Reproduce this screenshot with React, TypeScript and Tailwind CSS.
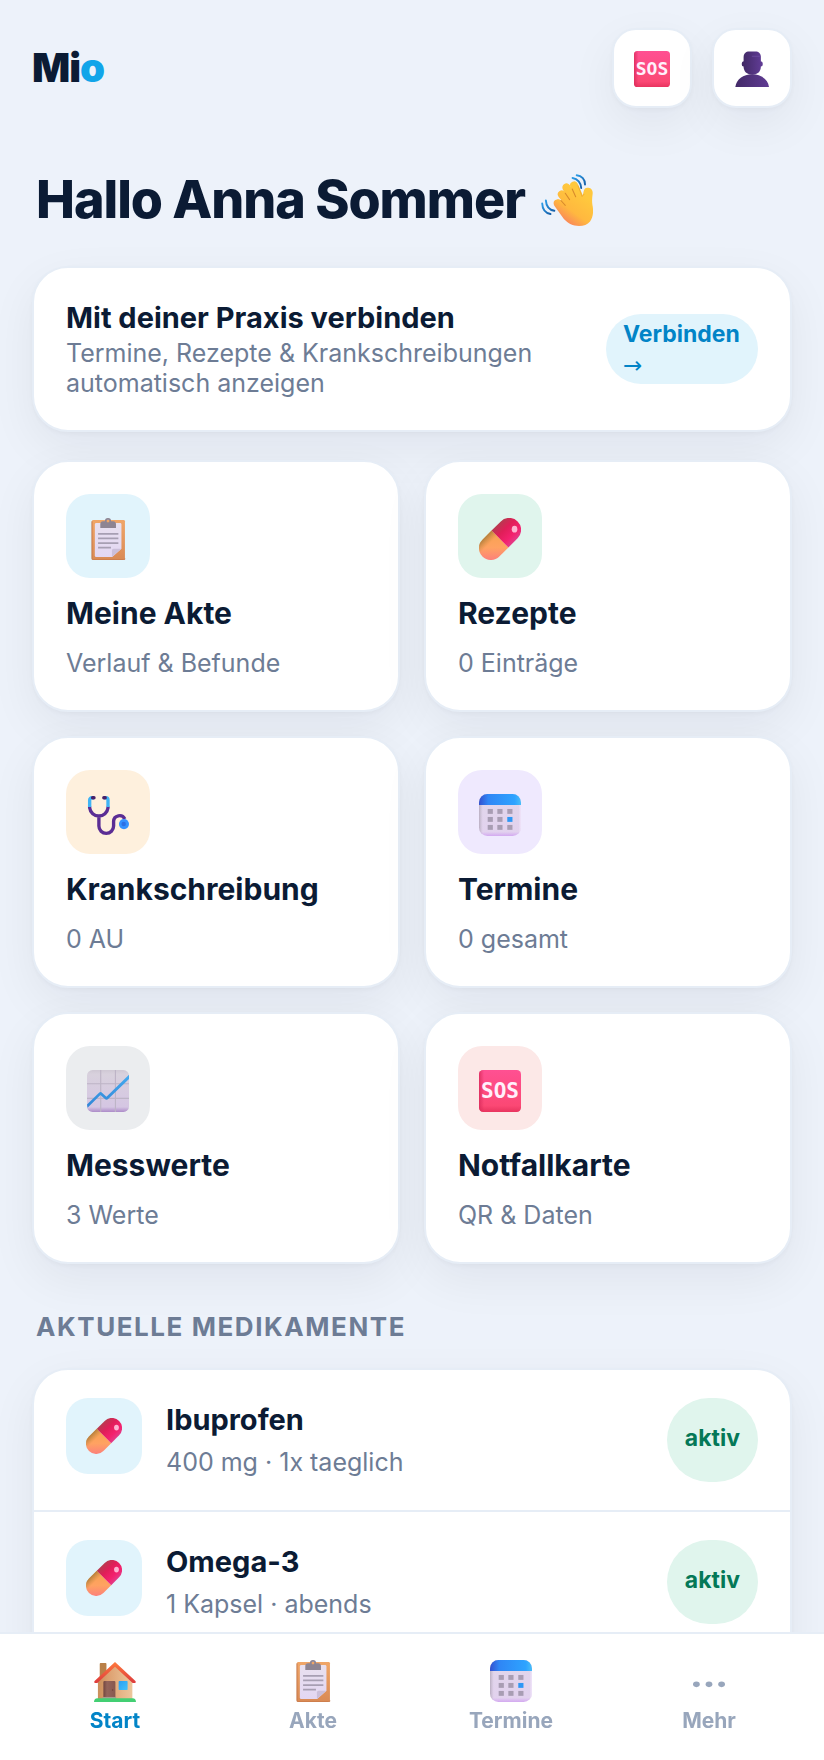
import type { ComponentType } from 'react';

type Icon = ComponentType<{ className?: string }>;

interface Tile {
  title: string;
  subtitle: string;
  href: string;
  icon: Icon;
  tint: string;
}

interface Medication {
  name: string;
  dose: string;
}

interface NavItem {
  label: string;
  href: string;
  icon: Icon;
  active?: boolean;
}

const CARD = 'bg-white border-2 border-[#e6edf6] shadow-[0_2px_4px_rgba(15,23,42,0.03),0_16px_48px_rgba(15,23,42,0.06)]';

// Gradients shared by all emoji drawings
function EmojiDefs() {
  return (
    <svg className="absolute w-0 h-0" aria-hidden="true">
      <defs>
        <linearGradient id="sosFace" x1="0" y1="0" x2="0" y2="1">
          <stop offset="0" stopColor="#ff5092" />
          <stop offset="0.85" stopColor="#fb4874" />
          <stop offset="1" stopColor="#e8345f" />
        </linearGradient>
        <linearGradient id="sosEdge" x1="0" y1="0" x2="1" y2="0">
          <stop offset="0" stopColor="#d92a5a" stopOpacity="0.8" />
          <stop offset="0.12" stopColor="#d92a5a" stopOpacity="0" />
        </linearGradient>
        <linearGradient id="bust" x1="0" y1="0" x2="1" y2="0">
          <stop offset="0" stopColor="#432a68" />
          <stop offset="1" stopColor="#5f3b93" />
        </linearGradient>
        <linearGradient id="board" x1="0" y1="0" x2="0" y2="1">
          <stop offset="0" stopColor="#f0a668" />
          <stop offset="1" stopColor="#d98a55" />
        </linearGradient>
        <linearGradient id="sheet" x1="0" y1="0" x2="0" y2="1">
          <stop offset="0" stopColor="#e8e0ef" />
          <stop offset="1" stopColor="#e3d7f3" />
        </linearGradient>
        <linearGradient id="pillPink" x1="0" y1="0" x2="0" y2="1">
          <stop offset="0" stopColor="#b83a50" />
          <stop offset="0.35" stopColor="#e01e58" />
          <stop offset="0.75" stopColor="#f4216e" />
          <stop offset="1" stopColor="#e23c88" />
        </linearGradient>
        <linearGradient id="pillOrange" x1="1" y1="0" x2="0" y2="1">
          <stop offset="0" stopColor="#f6a24e" />
          <stop offset="0.5" stopColor="#ffa262" />
          <stop offset="1" stopColor="#fb7384" />
        </linearGradient>
        <linearGradient id="pillShade" x1="0" y1="0" x2="0" y2="1">
          <stop offset="0" stopColor="#a87a3a" stopOpacity="0.85" />
          <stop offset="1" stopColor="#c98a40" stopOpacity="0" />
        </linearGradient>
        <linearGradient id="calTop" x1="0" y1="0" x2="1" y2="0">
          <stop offset="0" stopColor="#3350cf" />
          <stop offset="0.22" stopColor="#2f86f5" />
          <stop offset="0.85" stopColor="#2ea3ff" />
          <stop offset="1" stopColor="#49bdf8" />
        </linearGradient>
        <linearGradient id="calBody" x1="0" y1="0" x2="0" y2="1">
          <stop offset="0" stopColor="#e0d6ea" />
          <stop offset="0.9" stopColor="#e2d2ee" />
          <stop offset="1" stopColor="#d3a9f0" />
        </linearGradient>
        <linearGradient id="calEdge" x1="0" y1="0" x2="1" y2="0">
          <stop offset="0" stopColor="#a99fb0" stopOpacity="0.7" />
          <stop offset="0.09" stopColor="#b9b0c0" stopOpacity="0" />
          <stop offset="0.94" stopColor="#f0e4fa" stopOpacity="0" />
          <stop offset="1" stopColor="#f0e4fa" />
        </linearGradient>
        <linearGradient id="chartBg" x1="0" y1="0" x2="0" y2="1">
          <stop offset="0" stopColor="#cfc8d4" />
          <stop offset="0.1" stopColor="#d8d1dd" />
          <stop offset="0.88" stopColor="#d5c6e3" />
          <stop offset="1" stopColor="#ac8bc8" />
        </linearGradient>
        <linearGradient id="chartLine" x1="0" y1="0" x2="0" y2="1">
          <stop offset="0" stopColor="#44aaf0" />
          <stop offset="1" stopColor="#3186d6" />
        </linearGradient>
        <linearGradient id="wall" x1="0" y1="0" x2="1" y2="0">
          <stop offset="0" stopColor="#c98f5a" />
          <stop offset="0.3" stopColor="#dda070" />
          <stop offset="1" stopColor="#ecc79c" />
        </linearGradient>
        <linearGradient id="roof" x1="0" y1="0" x2="0" y2="1">
          <stop offset="0" stopColor="#ff7a3d" />
          <stop offset="1" stopColor="#dd3b3d" />
        </linearGradient>
        <linearGradient id="door" x1="0" y1="0" x2="1" y2="0">
          <stop offset="0" stopColor="#71463f" />
          <stop offset="0.3" stopColor="#93645a" />
          <stop offset="1" stopColor="#87584f" />
        </linearGradient>
        <linearGradient id="pane" x1="0" y1="0" x2="1" y2="1">
          <stop offset="0" stopColor="#2a9ff2" />
          <stop offset="1" stopColor="#42c2fb" />
        </linearGradient>
        <linearGradient id="hand" gradientUnits="userSpaceOnUse" x1="24" y1="12" x2="13" y2="27">
          <stop offset="0" stopColor="#ffc83d" />
          <stop offset="0.6" stopColor="#ffb83f" />
          <stop offset="1" stopColor="#f9875a" />
        </linearGradient>
        <linearGradient id="motion" x1="0" y1="0" x2="1" y2="1">
          <stop offset="0" stopColor="#2c9be6" />
          <stop offset="1" stopColor="#155fa8" />
        </linearGradient>
      </defs>
    </svg>
  );
}

function SosIcon({ className }: { className?: string }) {
  return (
    <svg viewBox="0 0 30 30" className={className} aria-hidden="true">
      <rect width="30" height="30" rx="3" fill="url(#sosFace)" />
      <rect width="30" height="30" rx="3" fill="url(#sosEdge)" />
      <text
        x="15"
        y="20"
        textAnchor="middle"
        fill="#fff0fb"
        className="text-[15px] font-bold font-['DejaVu_Sans_Mono',monospace]"
      >
        SOS
      </text>
    </svg>
  );
}

function PersonIcon({ className }: { className?: string }) {
  return (
    <svg viewBox="0 0 30 30" className={className} aria-hidden="true">
      <ellipse cx="8" cy="10.8" rx="1.6" ry="2.2" fill="#432a68" />
      <ellipse cx="22.4" cy="10.8" rx="1.6" ry="2.2" fill="#5f3b93" />
      <path
        d="M8 5C8 2 10 .4 12.6.4h5.200C20.600.4 22.400 2 22.400 5v8c0 4-2.600 6.800-7.200 6.800S8 17 8 13z"
        fill="url(#bust)"
      />
      <path d="M1.1 30C2 23.6 7.6 19.4 15.2 19.4S28.3 23.6 29.2 30z" fill="url(#bust)" />
      <path d="M15.2 4.4h6" stroke="#7350a8" strokeWidth="0.8" strokeLinecap="round" opacity="0.7" />
    </svg>
  );
}

function ClipboardIcon({ className }: { className?: string }) {
  return (
    <svg viewBox="0 0 30 30" className={className} aria-hidden="true">
      <rect x="3.5" y="1.4" width="23.6" height="28.6" rx="1" fill="url(#board)" />
      <path d="M3.5 2.4v26.6a1 1 0 0 0 1 1h21.6a1 1 0 0 0 1-1" fill="none" stroke="#bf6f42" strokeWidth="0.6" />
      <path d="M6.6 3.6h17a1 1 0 0 1 1 1v17.3L18 27.9H6.6a1 1 0 0 1-1-1V4.6a1 1 0 0 1 1-1z" fill="url(#sheet)" />
      <path d="M24.6 21.9H19a1.2 1.2 0 0 0-1.2 1.2v4.8z" fill="#cbbfda" />
      <path d="M7.9 11.3h14.5M7.9 14.6h14.5M7.9 17.9h14.5M7.9 21.1h9.2" stroke="#a79fb3" strokeWidth="1.2" />
      <path
        d="M15 0a2.2 2.2 0 0 0-2.2 2.3h-1.3c-1.3 0-2 .9-2 2V7.1h11.2V4.3c0-1.1-.8-2-2-2h-1.5A2.2 2.2 0 0 0 15 0zm0 1.2a1 1 0 1 1 0 2 1 1 0 0 1 0-2z"
        fill="#8e8492"
        fillRule="evenodd"
      />
    </svg>
  );
}

function PillIcon({ className }: { className?: string }) {
  return (
    <svg viewBox="0 0 30 30" className={className} aria-hidden="true">
      <g transform="rotate(-45 15 15)">
        <path d="M15 6.5H5.8a8.5 8.5 0 0 0 0 17H15z" fill="url(#pillOrange)" />
        <path d="M15 6.5H5.8a8.5 8.5 0 0 0-8 5.6H15z" fill="url(#pillShade)" />
        <path d="M15 6.5h9.3a8.5 8.5 0 0 1 0 17H15z" fill="url(#pillPink)" />
      </g>
      <ellipse cx="25.4" cy="8" rx="2" ry="2.4" fill="#ffc3dc" opacity="0.9" />
    </svg>
  );
}

function StethoscopeIcon({ className }: { className?: string }) {
  return (
    <svg viewBox="0 0 30 30" className={className} fill="none" strokeWidth="2.4" aria-hidden="true">
      <path d="M1.9 9v.9a6.6 6.6 0 0 0 13.1 0V9" stroke="#5b2d94" />
      <path d="M8.5 16.6v6.3a5.2 5.2 0 0 0 10.5 0v-3.4a4.2 4.2 0 0 1 8-1.6" stroke="#5b2d94" />
      <path d="M5 2.7H3.5A1.6 1.6 0 0 0 1.9 4.3V9.2M12 2.7h1.4A1.6 1.6 0 0 1 15 4.3V9.2" stroke="#3fb4f5" />
      <path d="M4 2.7h1M12 2.7h1" stroke="#472069" strokeLinecap="round" />
      <circle cx="26.4" cy="21.5" r="3.6" fill="#3491ff" />
      <circle cx="26.2" cy="21.5" r="1.6" fill="#2c6fe4" />
    </svg>
  );
}

function CalendarIcon({ className }: { className?: string }) {
  const cols = [6.2, 13.1, 20.2];
  const rows = [10.7, 16.4, 22.1];

  return (
    <svg viewBox="0 0 30 30" className={className} aria-hidden="true">
      <rect width="30" height="30" rx="6" fill="url(#calBody)" />
      <rect width="30" height="30" rx="6" fill="url(#calEdge)" />
      <path d="M0 7.9V6a6 6 0 0 1 6-6h18a6 6 0 0 1 6 6v1.9z" fill="url(#calTop)" />
      {rows.map((y, r) =>
        cols.map((x, c) => (
          <rect key={`${r}-${c}`} x={x} y={y} width="3.7" height="3.5" fill={r === 1 && c === 2 ? '#2d97f5' : '#a89db3'} />
        ))
      )}
    </svg>
  );
}

function ChartIcon({ className }: { className?: string }) {
  return (
    <svg viewBox="0 0 30 30" className={className} aria-hidden="true">
      <rect width="30" height="30" rx="4" fill="url(#chartBg)" />
      <path d="M9.8 0v30M20.3 0v30M0 9.8h30M0 20.3h30" stroke="#bdb4c6" strokeWidth="0.8" />
      <path
        d="M0 24.6 8.4 16.4a1.8 1.8 0 0 1 2.5 0l3 2.7L30 3.4v3L15.3 20.6a1.9 1.9 0 0 1-2.7 0l-3-2.7L.4 27z"
        fill="url(#chartLine)"
      />
    </svg>
  );
}

function HouseIcon({ className }: { className?: string }) {
  return (
    <svg viewBox="0 0 30 30" className={className} aria-hidden="true">
      <rect x="4.1" y="2.2" width="4.8" height="11" rx="0.6" fill="#b98048" />
      <path d="M2.8 14.6 15 3l12.4 11.6v13.6H2.8z" fill="url(#wall)" />
      <path d="M15 1.4.6 14.9a1.1 1.1 0 0 0 0 1.6h1.8L15 4.9l12.6 11.6h1.8a1.1 1.1 0 0 0 0-1.6z" fill="url(#roof)" />
      <rect x="6.7" y="15" width="8.6" height="12.4" rx="0.8" fill="url(#door)" />
      <circle cx="13.3" cy="21.4" r="0.5" fill="#6b3f38" />
      <rect x="17.6" y="15" width="6.4" height="6.4" rx="0.5" fill="url(#pane)" />
      <rect x="6.2" y="26.4" width="9.6" height="1.4" fill="#a79a90" />
      <path d="M0 30c0-1.6.9-2.7 2.4-2.7h25.2c1.5 0 2.4 1.1 2.4 2.7z" fill="#43cf73" />
    </svg>
  );
}

function WaveIcon({ className }: { className?: string }) {
  return (
    <svg viewBox="0 0 30 30" className={className} fill="none" strokeLinecap="round" aria-hidden="true">
      <path
        d="M8 15.2c1-.9 2.4-.6 3.3.4l6.7-5.8 5.6 4.8 1-4.6c.4-1.7 1.4-2.3 2.8-2 1.8.3 2.6 1.6 2.4 3.4-.3 2.5-.5 4.2-.1 6.6.7 3.5.4 6.9-1.4 9.4-1.5 1.900-3.600 2.600-6.400 2.600-3.500 0-6.200-1.400-8.700-4L7.800 18.400c-.7-1.100-.8-2.300.2-3.200z"
        fill="url(#hand)"
      />
      <path d="m10 17 6.400 6M12 11.800l6.500 8" stroke="url(#hand)" strokeWidth="4.6" />
      <path d="m14.700 7.800 6 10" stroke="url(#hand)" strokeWidth="4.8" />
      <path d="m19.100 6.600 4 9" stroke="url(#hand)" strokeWidth="4.6" />
      <path d="m11.500 15.300 2.500 2.800M14 11.100l2.500 3.700M18 8.700l2 4.400" stroke="#d88a2c" strokeWidth="0.6" />
      <path d="m21.400 6.800 2.300 6.200 1.100-1.300" stroke="#e59a2f" strokeWidth="0.5" opacity="0.7" />
      <g stroke="url(#motion)" strokeWidth="1.1">
        <path d="M20.600.7c2.900.2 4.900 2.500 4.800 5.400" />
        <path d="M18.200 2.300c2.900.5 4.900 2.900 5 5.800" />
        <path d="M.7 17c.1 3.200 1.900 5.500 4.800 6.100" />
        <path d="M2.800 15.200c.2 3.200 1.900 5.500 4.900 6" />
      </g>
    </svg>
  );
}

function MoreIcon({ className }: { className?: string }) {
  return (
    <svg viewBox="0 0 30 30" className={className} fill="currentColor" aria-hidden="true">
      <ellipse cx="6" cy="17.4" rx="2.4" ry="2" />
      <ellipse cx="15" cy="17.4" rx="2.4" ry="2" />
      <ellipse cx="24" cy="17.4" rx="2.4" ry="2" />
    </svg>
  );
}

const TILES: Tile[] = [
  { title: 'Meine Akte', subtitle: 'Verlauf & Befunde', href: '#akte', icon: ClipboardIcon, tint: 'bg-[#e1f4fc]' },
  { title: 'Rezepte', subtitle: '0 Einträge', href: '#rezepte', icon: PillIcon, tint: 'bg-[#e0f5ed]' },
  { title: 'Krankschreibung', subtitle: '0 AU', href: '#krankschreibung', icon: StethoscopeIcon, tint: 'bg-[#fef0dd]' },
  { title: 'Termine', subtitle: '0 gesamt', href: '#termine', icon: CalendarIcon, tint: 'bg-[#efe9fe]' },
  { title: 'Messwerte', subtitle: '3 Werte', href: '#messwerte', icon: ChartIcon, tint: 'bg-[#ebedef]' },
  { title: 'Notfallkarte', subtitle: 'QR & Daten', href: '#notfall', icon: SosIcon, tint: 'bg-[#fce8e7]' },
];

const MEDICATIONS: Medication[] = [
  { name: 'Ibuprofen', dose: '400 mg · 1x taeglich' },
  { name: 'Omega-3', dose: '1 Kapsel · abends' },
];

const NAV: NavItem[] = [
  { label: 'Start', href: '#start', icon: HouseIcon, active: true },
  { label: 'Akte', href: '#akte', icon: ClipboardIcon },
  { label: 'Termine', href: '#termine', icon: CalendarIcon },
  { label: 'Mehr', href: '#mehr', icon: MoreIcon },
];

function Header() {
  return (
    <header className="flex items-center justify-between">
      <a href="#start" className="text-[40px] leading-[48px] font-black tracking-tight">
        Mi<span className="text-[#12a5e9]">o</span>
      </a>
      <div className="flex gap-5">
        <button type="button" aria-label="Notfall" className={`${CARD} w-20 h-20 pt-0.5 rounded-3xl flex items-center justify-center`}>
          <SosIcon className="w-9 h-9" />
        </button>
        <button type="button" aria-label="Profil" className={`${CARD} w-20 h-20 pt-0.5 rounded-3xl flex items-center justify-center`}>
          <PersonIcon className="w-9 h-9" />
        </button>
      </div>
    </header>
  );
}

function ConnectCard() {
  return (
    <section className={`${CARD} rounded-[36px] p-8 flex items-center justify-between gap-6`}>
      <div className="max-w-[500px]">
        <h2 className="text-[29px] leading-9 font-bold">Mit deiner Praxis verbinden</h2>
        <p className="mt-0.5 text-[25px] leading-[30px] text-[#6d7c95]">
          Termine, Rezepte &amp; Krankschreibungen automatisch anzeigen
        </p>
      </div>
      <button
        type="button"
        className="w-[152px] shrink-0 px-[17px] pt-[5px] pb-[3px] rounded-full bg-[#e1f4fc] text-left text-[23px] leading-[31px] font-bold text-[#0284c7]"
      >
        Verbinden <span className="font-['DejaVu_Sans',sans-serif] font-normal">→</span>
      </button>
    </section>
  );
}

function TileCard({ tile }: { tile: Tile }) {
  const Icon = tile.icon;
  return (
    <a href={tile.href} className={`${CARD} rounded-[36px] p-8 block`}>
      <span className={`${tile.tint} w-21 h-21 pt-1.5 rounded-3xl flex items-center justify-center`}>
        <Icon className="w-[42px] h-[42px]" />
      </span>
      <h3 className="mt-4 text-[30px] leading-[38px] font-bold">{tile.title}</h3>
      <p className="mt-4 text-[25px] leading-[30px] text-[#6d7c95]">{tile.subtitle}</p>
    </a>
  );
}

function MedicationRow({ medication }: { medication: Medication }) {
  return (
    <li className="flex items-start gap-6 px-8 py-7 last:pb-12">
      <span className="w-19 h-19 rounded-[22px] bg-[#e1f4fc] flex items-center justify-center shrink-0">
        <PillIcon className="w-9 h-9" />
      </span>
      <div className="flex-1 pt-0.5">
        <h3 className="text-[29px] leading-10 font-bold">{medication.name}</h3>
        <p className="mt-[7px] text-[25px] leading-[30px] text-[#6d7c95]">{medication.dose}</p>
      </div>
      <span className="h-21 px-[18px] pb-1 rounded-full bg-[#e0f5ed] flex items-center text-[23px] leading-8 font-bold text-[#047857]">
        aktiv
      </span>
    </li>
  );
}

function BottomNav() {
  return (
    <nav className="fixed inset-x-0 bottom-0 px-4 pt-[26px] pb-6 grid grid-cols-4 bg-white/98 border-t-2 border-[#e6edf6]">
      {NAV.map(({ label, href, icon: Icon, active }) => (
        <a
          key={label}
          href={href}
          aria-current={active ? 'page' : undefined}
          className={`flex flex-col items-center gap-1 text-[21px] leading-[30px] font-bold ${active ? 'text-[#0284c7]' : 'text-[#98a6bc]'}`}
        >
          <Icon className="w-[42px] h-[42px]" />
          {label}
        </a>
      ))}
    </nav>
  );
}

export default function App() {
  return (
    <div className="min-h-screen bg-[#edf2fa] font-[Inter,sans-serif] text-[#0b1b34]">
      <EmojiDefs />
      <main className="px-8 pt-7 pb-20">
        <Header />

        <h1 className="mt-15 mb-[34px] px-1 flex items-center gap-4 text-[52px] leading-[64px] font-extrabold tracking-[-0.02em]">
          Hallo Anna Sommer
          <WaveIcon className="w-[52px] h-[52px]" />
        </h1>

        <ConnectCard />

        <div className="mt-7 grid grid-cols-2 gap-6">
          {TILES.map(tile => (
            <TileCard key={tile.title} tile={tile} />
          ))}
        </div>

        <h2 className="mt-12 mb-[26px] px-1 text-[26px] leading-[30px] font-bold uppercase tracking-[0.06em] text-[#6d7c95]">
          Aktuelle Medikamente
        </h2>
        <ul className={`${CARD} rounded-[36px] divide-y-2 divide-[#e6edf6]`}>
          {MEDICATIONS.map(medication => (
            <MedicationRow key={medication.name} medication={medication} />
          ))}
        </ul>
      </main>
      <BottomNav />
    </div>
  );
}
